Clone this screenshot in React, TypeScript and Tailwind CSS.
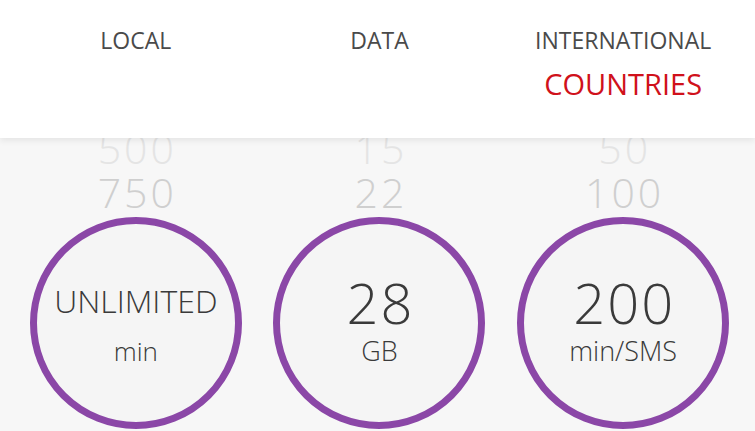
import React from 'react';

type Plan = {
  label: string;
  extra?: string;
  faded: string;
  above: string;
  value: string;
  unit: string;
  big: boolean;
};

const plans: Plan[] = [
  { label: 'LOCAL', faded: '500', above: '750', value: 'UNLIMITED', unit: 'min', big: false },
  { label: 'DATA', faded: '15', above: '22', value: '28', unit: 'GB', big: true },
  { label: 'INTERNATIONAL', extra: 'COUNTRIES', faded: '50', above: '100', value: '200', unit: 'min/SMS', big: true },
];

const font = { fontFamily: '"Open Sans", "Liberation Sans", sans-serif' };

const App: React.FC = () => {
  return (
    <div className="w-[755px] h-[431px] overflow-hidden bg-[#f7f7f7] flex flex-col" style={font}>
      {/* Tabs */}
      <header className="relative z-10 h-[138px] shrink-0 bg-white shadow-[0_3px_6px_rgba(0,0,0,0.07)] grid grid-cols-3 pl-[14px] pr-[10px]">
        {plans.map((p) => (
          <div key={p.label} className="flex flex-col items-center pt-[26px]">
            <span className="text-[23px] leading-[28px] text-[#4a4a4a]">{p.label}</span>
            {p.extra && (
              <span className="mt-[13px] text-[29px] leading-[34px] text-[#d0111b]">{p.extra}</span>
            )}
          </div>
        ))}
      </header>

      {/* Pickers */}
      <main className="flex-1 overflow-hidden grid grid-cols-3 pl-[14px] pr-[10px]">
        {plans.map((p) => (
          <div key={p.label} className="flex flex-col items-center -mt-[12px]">
            <span className="pl-[3px] text-[41px] leading-[44px] font-light tracking-[3px] text-[#e4e4e4]">{p.faded}</span>
            <span className="pl-[3px] text-[41px] leading-[44px] font-light tracking-[3px] text-[#cfcfcf]">{p.above}</span>
            <div className="mt-[3px] w-[212px] h-[212px] shrink-0 rounded-full border-[7px] border-[#8b47a7] bg-[#f5f5f5] flex flex-col items-center text-[#3a3a3a]">
              {p.big ? (
                <>
                  <span className="mt-[48px] pl-[2px] text-[56px] leading-[60px] font-light tracking-[2px]">{p.value}</span>
                  <span className="mt-[3px] text-[27px] leading-[32px] font-light">{p.unit}</span>
                </>
              ) : (
                <>
                  <span className="mt-[57px] text-[32px] leading-[40px] font-light">{p.value}</span>
                  <span className="mt-[15px] text-[26px] leading-[30px] font-light">{p.unit}</span>
                </>
              )}
            </div>
          </div>
        ))}
      </main>
    </div>
  );
};

export default App;
